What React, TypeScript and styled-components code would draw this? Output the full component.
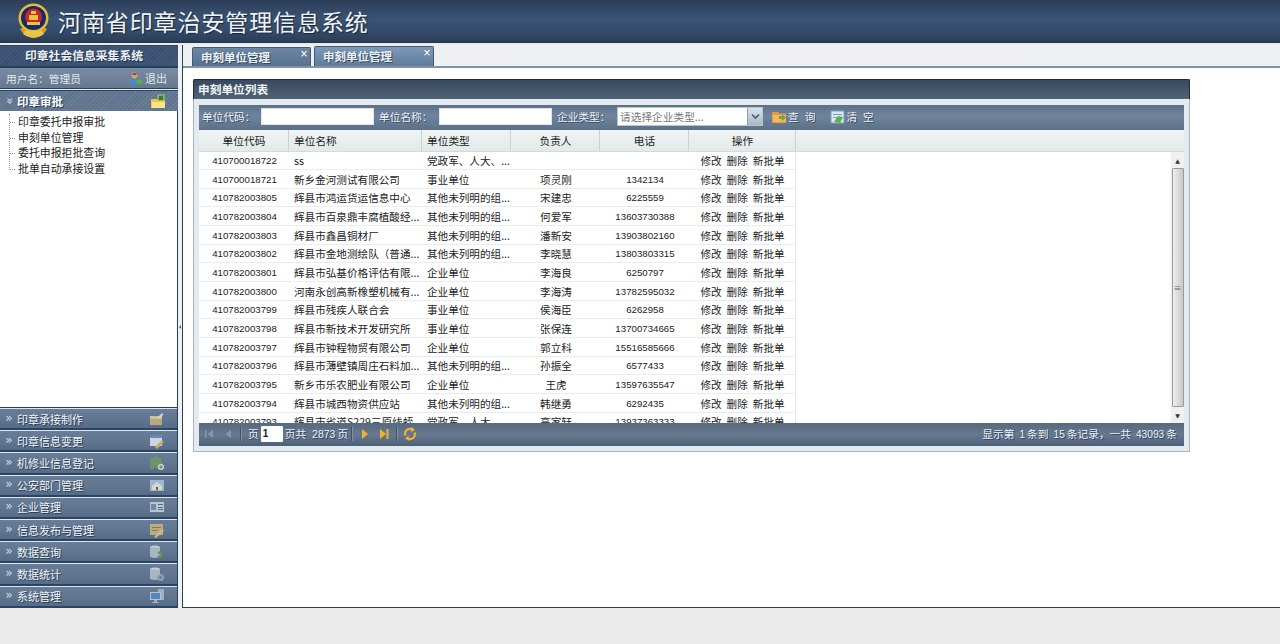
import React from "react";
import styled, { createGlobalStyle } from "styled-components";

const Global = createGlobalStyle`
  html, body { margin: 0; padding: 0; background: #ebebeb; }
  * { box-sizing: border-box; }
  body { font-family: "Noto Sans CJK SC", "Liberation Sans", sans-serif; font-size: 10.7px; }
`;

const Page = styled.div`
  width: 1280px; height: 644px; display: flex; flex-direction: column; overflow: hidden; background: #ebebeb;
`;
const Header = styled.header`
  height: 43px; flex: none; display: flex; align-items: center; padding-left: 17px; gap: 8px;
  background: linear-gradient(180deg, #2b3d57 0%, #3a5474 45%, #344b69 75%, #2a3d56 100%);
  border-bottom: 1px solid #24364d;
`;
const SystemTitle = styled.h1`
  margin: 0; font-size: 23px; line-height: 26px; font-weight: 400; color: #f0f4f8; letter-spacing: 0.9px;
  text-shadow: 1px 1px 1px #18263a; white-space: nowrap;
`;
const Main = styled.div`
  margin-top: 2px; height: 563px; flex: none; display: flex;
`;
const Sidebar = styled.aside`
  width: 178px; flex: none; display: flex; flex-direction: column;
`;
const SideTitle = styled.div`
  height: 23px; flex: none; display: flex; align-items: center; justify-content: center; padding: 0 10px 3px 0;
  font-weight: 700; font-size: 11.8px; color: #eef2f6; text-shadow: 1px 1px 0 #1e3048;
  background: repeating-linear-gradient(135deg, #415a7a 0 1px, #3a5170 1px 3px);
  border-top: 1px solid #30445f; border-bottom: 2px solid #27405f;
`;
const UserBar = styled.div`
  height: 21px; flex: none; display: flex; align-items: center; padding: 0 11px 0 6px; color: #e2e8ef; font-size: 10.7px;
  background: linear-gradient(180deg, #7a8ca4, #64788f);
  border-bottom: 1px solid #2c4260;
`;
const UserName = styled.span` flex: 1; `;
const Logout = styled.span` display: flex; align-items: center; gap: 2px; font-size: 11px; `;
const ActiveHead = styled.div`
  height: 21px; margin-top: 1px; flex: none; display: flex; align-items: center; padding: 0 12px 0 5px; color: #fff; font-weight: 700; font-size: 11.5px;
  text-shadow: 1px 1px 0 #2a3d56; gap: 4px;
  background: repeating-linear-gradient(135deg, #6b7f98 0 1px, #5f748e 1px 3px);
  border-top: 1px solid #2c4260;
`;
const Chevron = styled.span<{ $open?: boolean }>`
  width: 8px; height: 10px; flex: none; color: #d3dce6; font-size: 12px; line-height: 9px; font-weight: 400; text-align: center;
  font-family: "DejaVu Sans", sans-serif; text-shadow: none;
  transform: ${(p) => (p.$open ? "rotate(90deg)" : "none")};
`;
const HeadLabel = styled.span` flex: 1; `;
const TreeBox = styled.div`
  flex: none; height: 297px; background: #fff; border-right: 1px solid #27405f;
  padding: 3px 0 0 9px;
  border-bottom: 1px solid #27405f;
`;
const TreeList = styled.ul`
  margin: 0; padding: 0; list-style: none; border-left: 1px dotted #999; height: 56px;
`;
const TreeItem = styled.li`
  height: 15.67px; line-height: 15.67px; padding-left: 8px; font-size: 10.9px; color: #222; position: relative; white-space: nowrap;
  &::before { content: ""; position: absolute; left: 0; top: 8px; width: 5px; border-top: 1px dotted #999; }
`;
const Accordion = styled.div`
  flex: 1; display: flex; flex-direction: column; border-right: 1px solid #27405f;
`;
const AccordionItem = styled.div`
  height: 22.2px; flex: none; display: flex; align-items: center; padding: 0 12px 0 5px; gap: 4px; color: #f2f5f8; font-size: 11px;
  text-shadow: 1px 1px 0 #2a3d56;
  background: linear-gradient(180deg, #687d98 0%, #5f7590 55%, #566b86 100%);
  border-top: 1px solid #dfe5ec;
  border-bottom: 2px solid #2a4464;
`;
const Splitter = styled.div`
  width: 4px; flex: none; display: flex; align-items: center; justify-content: center; background: #eef0f2;
  &::before { content: ""; border-right: 2px solid #4b5d73; border-top: 2px solid transparent; border-bottom: 2px solid transparent; margin-top: 1px; }
`;
const Content = styled.section`
  flex: 1; min-width: 0; background: #fff; border-left: 1px solid #27405f; border-bottom: 1px solid #27405f; display: flex; flex-direction: column;
`;
const TabStrip = styled.div`
  height: 23px; flex: none; display: flex; align-items: flex-end; gap: 3px; padding-left: 9px; background: #eef0f2;
  border-bottom: 2px solid #7f93a9;
`;
const Tab = styled.div<{ $active?: boolean }>`
  width: ${(p) => (p.$active ? 120 : 119)}px; height: ${(p) => (p.$active ? 20 : 19)}px; position: relative; padding: 0 0 1px 8px;
  display: flex; align-items: center; color: #eef2f6; font-weight: 700; font-size: 11.5px; text-shadow: 1px 1px 0 #33495f;
  background: ${(p) => (p.$active ? "linear-gradient(180deg,#7e9ab8,#5f7c9b)" : "linear-gradient(180deg,#6c86a3,#567391)")};
  border: 1px solid #3f5b78; border-bottom: 0; border-radius: 2px 2px 0 0;
`;
const TabClose = styled.span`
  position: absolute; right: 1px; top: 1px; width: 10px; height: 10px; font-size: 10px; line-height: 10px; text-align: center; color: #fff; font-weight: 700;
  font-family: "DejaVu Sans", sans-serif; text-shadow: 0 0 1px #1e3048;
`;
const ContentBody = styled.div` flex: 1; padding: 11px 0 0 10px; `;
const Card = styled.div`
  width: 997px; height: 373px; display: flex; flex-direction: column; background: #e3ebf1; border: 1px solid #a9b4bd; border-top: 0;
`;
const CardTitle = styled.div`
  height: 20px; margin: 0 -1px; flex: none; display: flex; align-items: center; padding: 0 0 3px 4px; color: #f1f4f7; font-weight: 700; font-size: 11.7px;
  background: linear-gradient(180deg, #39495d, #4f6377); border: 1px solid #1c2a3a; border-bottom: 0; border-radius: 2px 2px 0 0;
`;
const CardInner = styled.div`
  flex: 1; margin: 6px 5px 5px 5px; display: flex; flex-direction: column; min-height: 0;
`;
const SearchBar = styled.div`
  height: 25px; flex: none; display: flex; align-items: center; padding: 0 0 2px 3px; color: #eef2f6; font-size: 10.7px;
  background: linear-gradient(180deg, #5d7088, #70849d 45%, #5b6f87);
  text-shadow: 1px 1px 0 #3a4d63;
`;
const FieldLabel = styled.span<{ $w: number }>` width: ${(p) => p.$w}px; flex: none; white-space: nowrap; `;
const TextInput = styled.div`
  width: 113px; height: 17px; flex: none; background: #fff; border: 1px solid #dfe5ec; margin-right: 5px;
`;
const Select = styled.div`
  width: 146px; height: 19px; flex: none; display: flex; background: #fff; border: 1px solid #b8c4d0; text-shadow: none;
`;
const SelectText = styled.span` flex: 1; color: #777; font-size: 10.7px; line-height: 17px; padding-left: 2px; `;
const SelectButton = styled.span`
  width: 15px; background: linear-gradient(180deg, #dbe2ea, #a9b8c9); border-left: 1px solid #8fa0b4;
  display: flex; align-items: center; justify-content: center;
`;
const ActionButton = styled.span<{ $gap: number }>`
  display: flex; align-items: center; gap: 1px; margin-left: ${(p) => p.$gap}px; color: #f1f4f7; letter-spacing: 6px; white-space: nowrap; font-size: 10.7px;
`;
const GridRowBase = styled.div`
  display: grid; grid-template-columns: 90px 133px 89px 89px 89px 107px; width: 597px;
`;
const GridHead = styled.div`
  height: 22px; flex: none; background: linear-gradient(180deg, #f0f4f4, #e2e9e8); border-bottom: 1px solid #d3dcdb;
`;
const HeadCell = styled.div<{ $left?: boolean }>`
  display: flex; align-items: center; justify-content: ${(p) => (p.$left ? "flex-start" : "center")}; height: 21px; padding: 0 0 1px ${(p) => (p.$left ? "5px" : "1px")};
  color: #222; font-size: 10.7px; border-right: 1px solid #c9d3d2; background: linear-gradient(180deg, #f0f4f4, #e2e9e8);
`;
const GridBody = styled.div`
  flex: 1; min-height: 0; display: flex; background: #fff; overflow: hidden;
`;
const Rows = styled.div` flex: 1; overflow: hidden; margin-top: -0.5px; `;
const DataRow = styled(GridRowBase)`
  height: 18.67px; border-bottom: 1px solid #e8edf0;
`;
const Cell = styled.div<{ $left?: boolean; $mono?: boolean }>`
  display: flex; align-items: center; justify-content: ${(p) => (p.$left ? "flex-start" : "center")}; padding-left: ${(p) => (p.$left ? "5px" : "1px")};
  color: #222; white-space: nowrap; overflow: hidden; height: 18px;
  font-size: ${(p) => (p.$mono ? "9.7px" : "10.6px")};
  font-family: ${(p) => (p.$mono ? '"Liberation Sans", sans-serif' : "inherit")};
`;
const OpCell = styled(Cell)` gap: 5px; border-right: 1px solid #e4e9ec; `;
const Scrollbar = styled.div`
  width: 14px; flex: none; background: #f0f0f0; display: flex; flex-direction: column; align-items: center; color: #333; font-size: 6px; border-left: 1px solid #f7f7f7;
`;
const ScrollArrow = styled.span`
  height: 16px; flex: none; display: flex; align-items: center; justify-content: center; font-family: "DejaVu Sans", sans-serif;
`;
const ScrollThumb = styled.span`
  width: 12px; flex: 1; background: linear-gradient(90deg, #eee, #c8c8c8); border: 1px solid #9a9a9a; border-radius: 1px;
  display: flex; align-items: center; justify-content: center; font-size: 8px; color: #666; line-height: 1;
`;
const Pager = styled.div`
  height: 23px; flex: none; display: flex; align-items: center; padding: 0 7px 2px 0; color: #eef2f6; font-size: 10.7px;
  background: linear-gradient(180deg, #56697f, #66798f 50%, #4c6077);
  text-shadow: 1px 1px 0 #33465c; white-space: nowrap;
`;
const PagerIcon = styled.span`
  width: 19px; flex: none; display: flex; align-items: center; justify-content: center;
`;
const PagerSep = styled.span`
  width: 1px; height: 14px; flex: none; background: #3f5268; box-shadow: 1px 0 0 #7f90a4; margin: 0 3px;
`;
const PageLabel = styled.span` margin: 0 2px 0 4px; `;
const PageInput = styled.span`
  width: 22px; height: 16px; flex: none; background: #fff; color: #222; font: 700 10px/16px "Liberation Sans", sans-serif; padding-left: 2px; margin-right: 2px; text-shadow: none; border-radius: 1px;
`;
const PagerNum = styled.span` font: 400 10.5px "Liberation Sans", sans-serif; margin: 0 2px 0 6px; `;
const PagerSummary = styled.span` margin-left: auto; `;
const PagerSummaryNum = styled.span` font: 400 10.2px "Liberation Sans", sans-serif; margin: 0 2px 0 5px; `;
const SmallIcon = styled.svg` flex: none; display: block; `;
const MutedIcon = styled(SmallIcon)` opacity: 0.85; `;

const Emblem = () => (
  <SmallIcon width="33" height="36" viewBox="0 0 33 36">
    <path d="M3 26c4 7 10 9 13.500 9s10-2 13.500-9l-4-2H7z" fill="#c9a02c" />
    <ellipse cx="16.500" cy="15" rx="15" ry="14.500" fill="#e3bd33" />
    <ellipse cx="16.500" cy="15" rx="12.500" ry="12" fill="#16296f" />
    <circle cx="16.500" cy="14" r="8.500" fill="#c8242a" />
    <path d="M10 19h13v3H10z" fill="#e8c53c" />
    <path d="M12 12h9v5h-9zM14 8h5v3h-5z" fill="#e8c53c" />
    <path d="M6 31c3 2 7 3.500 10.500 3.500S24 33 27 31l-2-3H8z" fill="#e7c64a" />
  </SmallIcon>
);
const UserIcon = () => (
  <SmallIcon width="14" height="13" viewBox="0 0 14 13">
    <circle cx="5.500" cy="3.500" r="3" fill="#d8a06a" />
    <path d="M5 1l3 .5L7 3H3z" fill="#7a4a20" />
    <path d="M1 12c0-3 2-5 4.500-5S9 8.500 9.500 12z" fill="#3f8fd0" />
    <path d="M8 8h2V6l4 3.500L10 13v-2H8z" fill="#5cb040" />
  </SmallIcon>
);
const FolderIcon = () => (
  <SmallIcon width="15" height="16" viewBox="0 0 15 16">
    <path d="M6 1h8v9H6z" fill="#7fae6a" />
    <path d="M8 3h4v4H8z" fill="#3d7a3d" />
    <path d="M0 6h6l1 1.500h7V15H0z" fill="#f0c64a" />
    <path d="M1 9h13v6H1z" fill="#fbe58a" />
  </SmallIcon>
);
const MenuIcon = ({ kind }: { kind: number }) => {
  const shapes: React.ReactNode[] = [
    <><path d="M1 5h12v9H1z" fill="#c9b27a" /><path d="M1 5h12v3H1z" fill="#e0cf9c" /><path d="M9 6l4-4 1.500 1.500-4 4z" fill="#dfe5ec" /></>,
    <><path d="M1 2h12v11H1z" fill="#dfe8f2" /><path d="M1 2h12v3H1z" fill="#6a8db5" /><path d="M6 14l7-7 2 2-7 7z" fill="#d9b45e" /></>,
    <><path d="M1 3h5V1h3v2h3v4h2v3h-2v4H7v-2H5v2H1z" fill="#6f9a62" /><circle cx="12" cy="12" r="3" fill="#e6efe2" /><path d="M11.500 10h1v4h-1zM10 11.500h4v1h-4z" fill="#4d8a42" /></>,
    <><path d="M1 3h14v11H1z" fill="#a9c2dc" /><path d="M3 9l5-4 5 4v4H3z" fill="#efe7d2" /><path d="M7 10h2v3H7z" fill="#7a5a3a" /></>,
    <><path d="M1 3h14v10H1z" fill="#c8d3df" /><path d="M2 5h5v6H2z" fill="#6d90b5" /><path d="M9 5h5v1H9zM9 8h5v1H9zM9 10h5v1H9z" fill="#54687f" /></>,
    <><path d="M1 2h13v11H1z" fill="#cbb67d" /><path d="M3 5h9v1H3zM3 8h6v1H3z" fill="#8c7a48" /><path d="M5 15l8-8 2 2-8 7z" fill="#e3c77a" /></>,
    <><ellipse cx="6" cy="3.500" rx="5" ry="2" fill="#d5dde5" /><path d="M1 3.500h10V12c0 1-2 2-5 2s-5-1-5-2z" fill="#b5c1cd" /><path d="M8 8l4-1 2 3-2 4-4-1 3-2z" fill="#5da04a" /></>,
    <><ellipse cx="6" cy="3.500" rx="5" ry="2" fill="#d5dde5" /><path d="M1 3.500h10V12c0 1-2 2-5 2s-5-1-5-2z" fill="#b5c1cd" /><circle cx="11.500" cy="11.500" r="3.500" fill="#9aa8b6" /><circle cx="11.500" cy="11.500" r="1.300" fill="#5f7590" /></>,
    <><path d="M9 1h6v11H9z" fill="#aeb9c4" /><path d="M1 4h11v8H1z" fill="#c6d0da" /><path d="M2 5h9v6H2z" fill="#4c8cc4" /><path d="M5 12h3v2h2v1H3v-1h2z" fill="#aeb9c4" /></>,
  ];
  return <MutedIcon width="16" height="16" viewBox="0 0 16 16">{shapes[kind]}</MutedIcon>;
};
const QueryIcon = () => (
  <SmallIcon width="15" height="13" viewBox="0 0 15 13">
    <path d="M0 2h6l1 1.500h7V13H0z" fill="#e99a3a" />
    <path d="M1 5h13v7H1z" fill="#f3b75e" />
    <path d="M7 6h3V4l4 3.500L10 11V9H7z" fill="#6aa84a" />
  </SmallIcon>
);
const ClearIcon = () => (
  <SmallIcon width="15" height="14" viewBox="0 0 15 14">
    <path d="M1 1h13v12H1z" fill="#dbe8f2" stroke="#7fa0bd" />
    <path d="M3 4h9v1H3zM3 7h5v1H3z" fill="#7fa0bd" />
    <path d="M4 12l4-6 5 1-3 6z" fill="#5fb04a" />
  </SmallIcon>
);
const DownChevron = () => (
  <SmallIcon width="9" height="7" viewBox="0 0 9 7" fill="none">
    <path d="M1 1.500l3.500 3.500L8 1.500" stroke="#4a5d73" strokeWidth="1.600" />
  </SmallIcon>
);
const NavIcon = ({ d, fill }: { d: string; fill: string }) => (
  <SmallIcon width="12" height="12" viewBox="0 0 12 12"><path d={d} fill={fill} /></SmallIcon>
);
const RefreshIcon = () => (
  <SmallIcon width="14" height="14" viewBox="0 0 14 14" fill="none">
    <path d="M2.500 8.500A4.700 4.700 0 0 1 9.500 2.800" stroke="#eeb32e" strokeWidth="2.200" />
    <path d="M8 0l4 2.500L8.500 5.500z" fill="#eeb32e" />
    <path d="M11.500 5.500A4.700 4.700 0 0 1 4.500 11.200" stroke="#eeb32e" strokeWidth="2.200" />
    <path d="M6 14l-4-2.500L5.500 8.500z" fill="#eeb32e" />
  </SmallIcon>
);

const treeItems = ["印章委托申报审批", "申刻单位管理", "委托申报拒批查询", "批单自动承接设置"];
const menus = ["印章承接制作", "印章信息变更", "机修业信息登记", "公安部门管理", "企业管理", "信息发布与管理", "数据查询", "数据统计", "系统管理"];
const OTHER = "其他未列明的组...";
const PARTY = "党政军、人大、...";
const rows: [string, string, string, string, string][] = [
  ["410700018722", "ss", PARTY, "", ""],
  ["410700018721", "新乡金河测试有限公司", "事业单位", "项灵刚", "1342134"],
  ["410782003805", "辉县市鸿运货运信息中心", OTHER, "宋建忠", "6225559"],
  ["410782003804", "辉县市百泉鼎丰腐植酸经...", OTHER, "何爱军", "13603730388"],
  ["410782003803", "辉县市鑫昌铜材厂", OTHER, "潘新安", "13903802160"],
  ["410782003802", "辉县市金地测绘队（普通...", OTHER, "李晓慧", "13803803315"],
  ["410782003801", "辉县市弘基价格评估有限...", "企业单位", "李海良", "6250797"],
  ["410782003800", "河南永创高新橡塑机械有...", "企业单位", "李海涛", "13782595032"],
  ["410782003799", "辉县市残疾人联合会", "事业单位", "侯海臣", "6262958"],
  ["410782003798", "辉县市新技术开发研究所", "事业单位", "张保连", "13700734665"],
  ["410782003797", "辉县市钟程物贸有限公司", "企业单位", "郭立科", "15516585666"],
  ["410782003796", "辉县市薄壁镇周庄石料加...", OTHER, "孙振全", "6577433"],
  ["410782003795", "新乡市乐农肥业有限公司", "企业单位", "王虎", "13597635547"],
  ["410782003794", "辉县市城西物资供应站", OTHER, "韩继勇", "6292435"],
  ["410782003793", "辉县市省道S229三原线蛭...", PARTY, "高家轩", "13937363333"],
];

export default function App() {
  return (
    <Page>
      <Global />
      <Header>
        <Emblem />
        <SystemTitle>河南省印章治安管理信息系统</SystemTitle>
      </Header>
      <Main>
        <Sidebar>
          <SideTitle>印章社会信息采集系统</SideTitle>
          <UserBar>
            <UserName>用户名：管理员</UserName>
            <Logout><UserIcon />退出</Logout>
          </UserBar>
          <ActiveHead>
            <Chevron $open>»</Chevron>
            <HeadLabel>印章审批</HeadLabel>
            <FolderIcon />
          </ActiveHead>
          <TreeBox>
            <TreeList>
              {treeItems.map((t) => <TreeItem key={t}>{t}</TreeItem>)}
            </TreeList>
          </TreeBox>
          <Accordion>
            {menus.map((m, i) => (
              <AccordionItem key={m}>
                <Chevron>»</Chevron>
                <HeadLabel>{m}</HeadLabel>
                <MenuIcon kind={i} />
              </AccordionItem>
            ))}
          </Accordion>
        </Sidebar>
        <Splitter />
        <Content>
          <TabStrip>
            <Tab>申刻单位管理<TabClose>×</TabClose></Tab>
            <Tab $active>申刻单位管理<TabClose>×</TabClose></Tab>
          </TabStrip>
          <ContentBody>
            <Card>
              <CardTitle>申刻单位列表</CardTitle>
              <CardInner>
                <SearchBar>
                  <FieldLabel $w={59}>单位代码：</FieldLabel>
                  <TextInput />
                  <FieldLabel $w={60}>单位名称：</FieldLabel>
                  <TextInput />
                  <FieldLabel $w={60}>企业类型：</FieldLabel>
                  <Select>
                    <SelectText>请选择企业类型...</SelectText>
                    <SelectButton><DownChevron /></SelectButton>
                  </Select>
                  <ActionButton $gap={9}><QueryIcon />查询</ActionButton>
                  <ActionButton $gap={9}><ClearIcon />清空</ActionButton>
                </SearchBar>
                <GridHead>
                  <GridRowBase>
                    <HeadCell>单位代码</HeadCell>
                    <HeadCell $left>单位名称</HeadCell>
                    <HeadCell $left>单位类型</HeadCell>
                    <HeadCell>负责人</HeadCell>
                    <HeadCell>电话</HeadCell>
                    <HeadCell>操作</HeadCell>
                  </GridRowBase>
                </GridHead>
                <GridBody>
                  <Rows>
                    {rows.map((r) => (
                      <DataRow key={r[0]}>
                        <Cell $mono>{r[0]}</Cell>
                        <Cell $left>{r[1]}</Cell>
                        <Cell $left>{r[2]}</Cell>
                        <Cell>{r[3]}</Cell>
                        <Cell $mono>{r[4]}</Cell>
                        <OpCell><span>修改</span><span>删除</span><span>新批单</span></OpCell>
                      </DataRow>
                    ))}
                  </Rows>
                  <Scrollbar>
                    <ScrollArrow>▲</ScrollArrow>
                    <ScrollThumb>≡</ScrollThumb>
                    <ScrollArrow>▼</ScrollArrow>
                  </Scrollbar>
                </GridBody>
                <Pager>
                  <PagerIcon><NavIcon d="M2 2h1.500v8H2zM10 2v8L4.500 6z" fill="#8496ab" /></PagerIcon>
                  <PagerIcon><NavIcon d="M9 2v8L3.500 6z" fill="#8496ab" /></PagerIcon>
                  <PagerSep />
                  <PageLabel>页</PageLabel>
                  <PageInput>1</PageInput>
                  <span>页共</span>
                  <PagerNum>2873</PagerNum>
                  <span>页</span>
                  <PagerSep />
                  <PagerIcon><NavIcon d="M3 1v10l6-5z" fill="#eeb32e" /></PagerIcon>
                  <PagerIcon><NavIcon d="M2 1v10l6-5zM8.500 1H10.500v10H8.500z" fill="#eeb32e" /></PagerIcon>
                  <PagerSep />
                  <PagerIcon><RefreshIcon /></PagerIcon>
                  <PagerSummary>
                    显示第<PagerSummaryNum>1</PagerSummaryNum>条到<PagerSummaryNum>15</PagerSummaryNum>条记录，一共<PagerSummaryNum>43093</PagerSummaryNum>条
                  </PagerSummary>
                </Pager>
              </CardInner>
            </Card>
          </ContentBody>
        </Content>
      </Main>
    </Page>
  );
}
